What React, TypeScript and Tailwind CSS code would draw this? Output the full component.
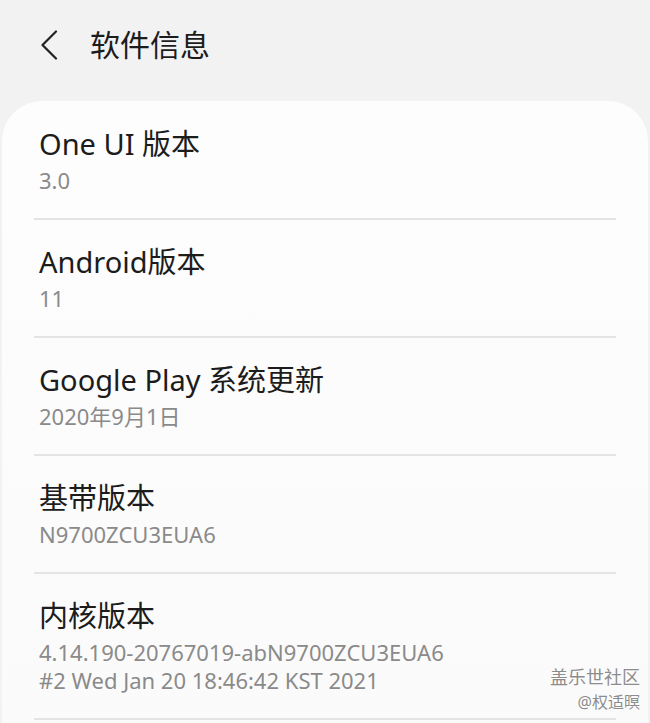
import React from "react";

interface IRowProps {
  title: string;
  lines: string[];
}

const Row = (props: IRowProps) => {
  const { title, lines } = props;
  return (
    <div className="px-[32px]">
      <div className="pl-[5px] pt-[24px] pb-[24px]">
        <div className="text-[29px] leading-[36px] text-[#1c1c1c]">{title}</div>
        <div className="mt-[4px] text-[22px] leading-[28px] text-[#8a8a8a]">
          {lines.map((l) => (
            <div key={l}>{l}</div>
          ))}
        </div>
      </div>
      <div className="h-[2px] bg-[#e4e4e4]"></div>
    </div>
  );
};

export default function App() {
  const rows: IRowProps[] = [
    { title: "One UI 版本", lines: ["3.0"] },
    { title: "Android版本", lines: ["11"] },
    { title: "Google Play 系统更新", lines: ["2020年9月1日"] },
    { title: "基带版本", lines: ["N9700ZCU3EUA6"] },
    {
      title: "内核版本",
      lines: ["4.14.190-20767019-abN9700ZCU3EUA6", "#2 Wed Jan 20 18:46:42 KST 2021"],
    },
  ];

  return (
    <div
      className="relative w-[650px] h-[723px] overflow-hidden bg-[#f2f2f2]"
      style={{ fontFamily: '"Noto Sans", "Noto Sans CJK SC", sans-serif' }}
    >
      {/* Header */}
      <div className="flex items-center h-[91px] pl-[40px] pb-[2px]">
        <svg width="18" height="30" viewBox="0 0 18 30" fill="none">
          <path d="M16 1.5 L2.5 15 L16 28.5" stroke="#222" strokeWidth="2.2" strokeLinecap="round" strokeLinejoin="round" />
        </svg>
        <div className="ml-[32px] text-[30px] leading-[36px] text-[#1c1c1c]">软件信息</div>
      </div>

      {/* Card */}
      <div className="mt-[10px] mx-[2px] pt-[1px] rounded-t-[40px] bg-gradient-to-b from-[#fdfdfd] to-[#fafafa] h-[700px]">
        {rows.map((r) => (
          <Row key={r.title} title={r.title} lines={r.lines} />
        ))}
      </div>

      {/* Watermark */}
      <div
        className="absolute right-[10px] top-[664px] flex flex-col items-end text-[#8c8c8c]"
        style={{ textShadow: "0 0 2px #fff, 0 0 2px #fff" }}
      >
        <div className="text-[18px] leading-[26px]">盖乐世社区</div>
        <div className="text-[16px] leading-[24px]">@权适暝</div>
      </div>
    </div>
  );
}
